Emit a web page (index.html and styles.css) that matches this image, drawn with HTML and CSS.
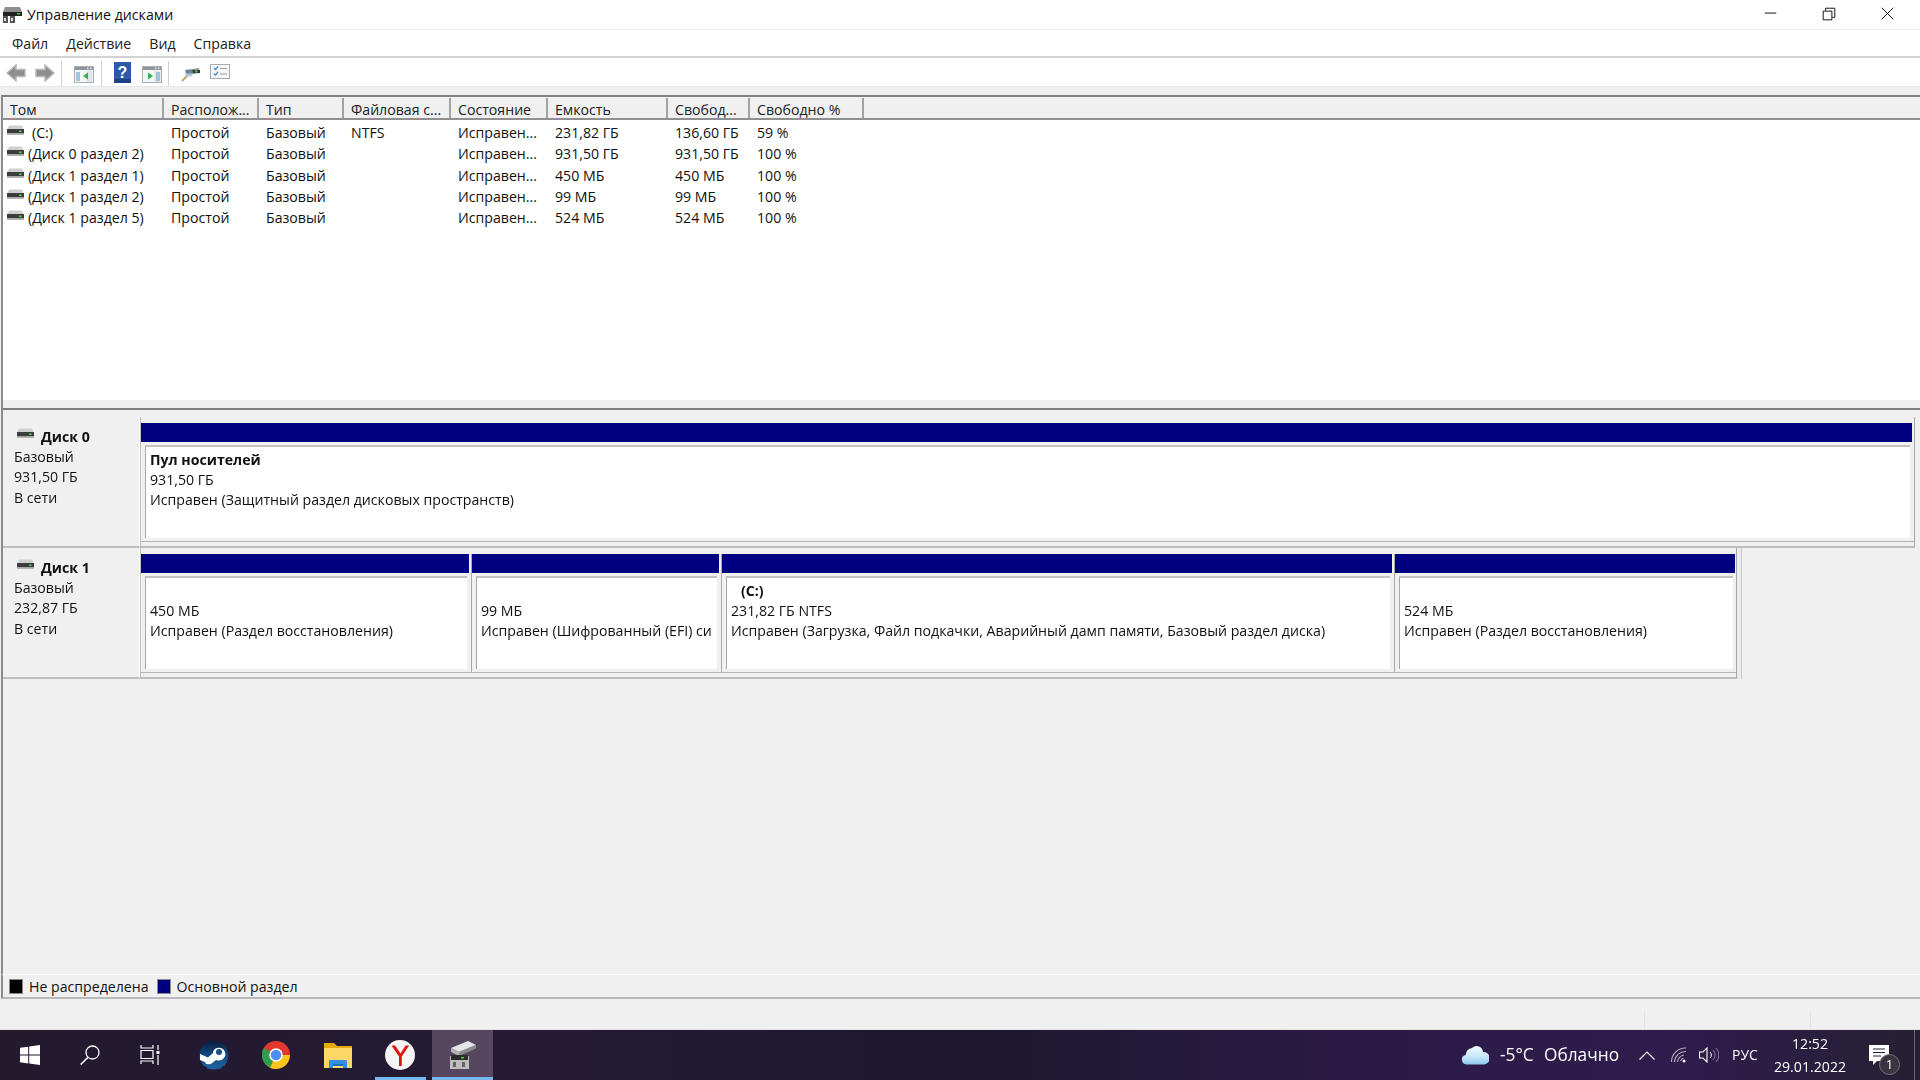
FILE: index.html
```html
<!DOCTYPE html>
<html lang="ru">
<head>
<meta charset="utf-8">
<title>Управление дисками</title>
<link rel="stylesheet" href="styles.css">
</head>
<body>
<svg class="defs" width="0" height="0">
  <symbol id="drive" viewBox="0 0 17 11">
    <path d="M2 0.500h13l1.500 3.500H.5z" fill="#cfcfcf"/>
    <rect x="0" y="4" width="17" height="4.500" fill="#3d3d3d"/>
    <rect x="0" y="8.500" width="17" height="1.500" fill="#b5b5b5"/>
    <rect x="12" y="5.500" width="2.500" height="1.500" fill="#4fd04f"/>
  </symbol>
  <symbol id="pane" viewBox="0 0 20 17">
    <rect x=".5" y=".5" width="19" height="16" fill="#f4f6f8" stroke="#a8adb2"/>
    <rect x="1" y="1" width="18" height="3" fill="#8f979e"/>
    <rect x="13" y="1.500" width="1.500" height="1.500" fill="#e8e8e8"/>
    <rect x="16" y="1.500" width="1.500" height="1.500" fill="#e8e8e8"/>
    <rect x="12.500" y="5" width="6" height="11" fill="#dfe6ea"/>
  </symbol>
</svg>
<div class="window">
  <header class="titlebar">
    <svg class="app-icon" viewBox="0 0 20 16"><path d="M3 0h15l2 5H1z" fill="#8f8f8f"/><rect x="1" y="5" width="19" height="4" fill="#222"/><rect x="15" y="6" width="3" height="1.500" fill="#46c846"/><path d="M1 9h5v7H1zM8 9h5v7H8z" fill="#555"/><path d="M2 11h2v3H2zM9 11h2v3H9z" fill="#ddd"/></svg>
    <span class="title">Управление дисками</span>
    <div class="controls">
      <svg class="ctl" viewBox="0 0 60 30"><path d="M24 13.500h12" stroke="#111" fill="none"/></svg>
      <svg class="ctl" viewBox="0 0 60 30"><path d="M24.500 11.500h9v9h-9zM27 11V8.500h9.500V18H34" stroke="#111" fill="none"/></svg>
      <svg class="ctl" viewBox="0 0 60 30"><path d="M24 8l12 12M36 8L24 20" stroke="#111" fill="none"/></svg>
    </div>
  </header>
  <nav class="menubar">
    <span class="menu-item">Файл</span>
    <span class="menu-item">Действие</span>
    <span class="menu-item">Вид</span>
    <span class="menu-item">Справка</span>
  </nav>
  <div class="toolbar">
    <svg class="tb-arrow" viewBox="0 0 20 18"><path d="M10 1L1 9l9 8v-4.500h9v-7h-9z" fill="#8e8e8e" stroke="#b8b8b8" stroke-width="1.500"/></svg>
    <svg class="tb-arrow tb-next" viewBox="0 0 20 18"><path d="M10 1l9 8-9 8v-4.500H1v-7h9z" fill="#8e8e8e" stroke="#b8b8b8" stroke-width="1.500"/></svg>
    <i class="tb-sep tb-sep-a"></i>
    <svg class="tb-pane" viewBox="0 0 20 17"><use href="#pane"/><rect x="2" y="6" width="4" height="9" fill="#9fc4dc"/><path d="M14 6.500v7l-5-3.500z" fill="#37b04a"/></svg>
    <i class="tb-sep tb-sep-b"></i>
    <svg class="tb-help" viewBox="0 0 17 21"><rect width="17" height="21" fill="#2c5aa8"/><rect y="17" width="17" height="4" fill="#1f3f86"/><text x="8.500" y="16" class="tb-help-q">?</text></svg>
    <svg class="tb-pane tb-pane2" viewBox="0 0 20 17"><use href="#pane"/><rect x="14" y="6" width="4" height="9" fill="#9fc4dc"/><path d="M6 6.500v7l5-3.500z" fill="#37b04a"/></svg>
    <i class="tb-sep tb-sep-c"></i>
    <svg class="tb-rescan" viewBox="0 0 20 18"><path d="M4 6l14-2 1 5-13 2z" fill="#9a9a9a"/><rect x="5" y="6" width="14" height="3" fill="#333"/><rect x="14" y="6.500" width="2.500" height="2" fill="#46c846"/><path d="M1 17l5-5" stroke="#c9a265" stroke-width="2"/><circle cx="8" cy="9" r="4" fill="#8fb9d9" opacity=".6"/></svg>
    <svg class="tb-check" viewBox="0 0 20 15"><rect x=".5" y=".5" width="19" height="14" fill="#f5f7f9" stroke="#a5abb0"/><path d="M4 4l1.500 1.500L8 2.500M4 9.500l1.500 1.500L8 8" stroke="#3e8fd0" fill="none" stroke-width="1.200"/><path d="M10 4.500h7M10 10h7" stroke="#9aa0a6"/></svg>
  </div>
  <div class="gap-band"></div>

  <section class="volumes">
    <div class="row head">
      <div class="cell">Том</div><div class="cell">Располож...</div><div class="cell">Тип</div><div class="cell">Файловая с...</div><div class="cell">Состояние</div><div class="cell">Емкость</div><div class="cell">Свобод...</div><div class="cell">Свободно %</div>
    </div>
    <div class="rows">
      <div class="row">
        <div class="cell name"><svg class="drive"><use href="#drive"/></svg><span class="c-label">(C:)</span></div><div class="cell">Простой</div><div class="cell">Базовый</div><div class="cell">NTFS</div><div class="cell">Исправен...</div><div class="cell">231,82 ГБ</div><div class="cell">136,60 ГБ</div><div class="cell">59 %</div>
      </div>
      <div class="row">
        <div class="cell name"><svg class="drive"><use href="#drive"/></svg><span>(Диск 0 раздел 2)</span></div><div class="cell">Простой</div><div class="cell">Базовый</div><div class="cell"></div><div class="cell">Исправен...</div><div class="cell">931,50 ГБ</div><div class="cell">931,50 ГБ</div><div class="cell">100 %</div>
      </div>
      <div class="row">
        <div class="cell name"><svg class="drive"><use href="#drive"/></svg><span>(Диск 1 раздел 1)</span></div><div class="cell">Простой</div><div class="cell">Базовый</div><div class="cell"></div><div class="cell">Исправен...</div><div class="cell">450 МБ</div><div class="cell">450 МБ</div><div class="cell">100 %</div>
      </div>
      <div class="row">
        <div class="cell name"><svg class="drive"><use href="#drive"/></svg><span>(Диск 1 раздел 2)</span></div><div class="cell">Простой</div><div class="cell">Базовый</div><div class="cell"></div><div class="cell">Исправен...</div><div class="cell">99 МБ</div><div class="cell">99 МБ</div><div class="cell">100 %</div>
      </div>
      <div class="row">
        <div class="cell name"><svg class="drive"><use href="#drive"/></svg><span>(Диск 1 раздел 5)</span></div><div class="cell">Простой</div><div class="cell">Базовый</div><div class="cell"></div><div class="cell">Исправен...</div><div class="cell">524 МБ</div><div class="cell">524 МБ</div><div class="cell">100 %</div>
      </div>
    </div>
  </section>

  <section class="disks">
    <div class="disk">
      <div class="disk-label">
        <div class="disk-name"><svg class="drive"><use href="#drive"/></svg><b>Диск 0</b></div>
        <div>Базовый</div><div>931,50 ГБ</div><div>В сети</div>
      </div>
      <div class="disk-map map-full">
        <div class="part part-full">
          <div class="bar"></div>
          <div class="box"><b>Пул носителей</b><div>931,50 ГБ</div><div>Исправен (Защитный раздел дисковых пространств)</div></div>
        </div>
      </div>
    </div>
    <div class="disk">
      <div class="disk-label">
        <div class="disk-name"><svg class="drive"><use href="#drive"/></svg><b>Диск 1</b></div>
        <div>Базовый</div><div>232,87 ГБ</div><div>В сети</div>
      </div>
      <div class="disk-map map-fit">
        <div class="part p1"><div class="bar"></div><div class="box"><div class="blank"></div><div>450 МБ</div><div>Исправен (Раздел восстановления)</div></div></div>
        <div class="part p2"><div class="bar"></div><div class="box"><div class="blank"></div><div>99 МБ</div><div>Исправен (Шифрованный (EFI) си</div></div></div>
        <div class="part p3"><div class="bar"></div><div class="box"><b class="c-part">(C:)</b><div>231,82 ГБ NTFS</div><div>Исправен (Загрузка, Файл подкачки, Аварийный дамп памяти, Базовый раздел диска)</div></div></div>
        <div class="part p4"><div class="bar"></div><div class="box"><div class="blank"></div><div>524 МБ</div><div>Исправен (Раздел восстановления)</div></div></div>
      </div>
    </div>
  </section>

  <div class="legend">
    <i class="swatch sw-black"></i><span>Не распределена</span>
    <i class="swatch sw-blue"></i><span>Основной раздел</span>
  </div>
  <div class="statusbar"><i class="st st1"></i><i class="st st2"></i></div>
</div>

<footer class="taskbar">
  <div class="tk tk-sys">
    <svg class="ic-win" viewBox="0 0 20 20"><path d="M0 2.800L8.200 1.700v7.900H0zM9.200 1.500L20 0v9.600H9.200zM0 10.500h8.200v7.900L0 17.200zM9.200 10.500H20V20L9.200 18.500z" fill="#fff"/></svg>
  </div>
  <div class="tk tk-sys">
    <svg class="ic-search" viewBox="0 0 20 20"><circle cx="12.500" cy="7.500" r="6.500" fill="none" stroke="#fff" stroke-width="1.300"/><path d="M8 12.300L.7 19.500" stroke="#fff" stroke-width="1.600"/></svg>
  </div>
  <div class="tk tk-sys">
    <svg class="ic-task" viewBox="0 0 20 20"><path d="M1 0v3h12V0M1 5.500h12v8H1zM1 19v-3h12v3" fill="none" stroke="#fff" stroke-width="1.200"/><path d="M18 0v5M18 10v10" stroke="#fff" stroke-width="1.200"/><rect x="16.500" y="6" width="3" height="3" fill="#fff"/></svg>
  </div>
  <div class="tk tk-app tk-first">
    <svg class="ic-app" viewBox="0 0 30 30"><defs><linearGradient id="stm" x1="0" y1="0" x2="0" y2="1"><stop offset="0" stop-color="#0d1a3a"/><stop offset=".45" stop-color="#10457c"/><stop offset="1" stop-color="#1a6aa4"/></linearGradient></defs><circle cx="15" cy="15" r="14.500" fill="url(#stm)"/><path d="M1 14l8 3.500 5-4.500 0-1c1-5 10-6 12 0s-4 10-9 8l-4 3c-2 3-6 2-7-1L1 20z" fill="#fff"/><circle cx="20" cy="12" r="3" fill="#1a4e84"/><path d="M4 25h22M8 28h14" stroke="#1f5d96" stroke-width="1.500"/></svg>
  </div>
  <div class="tk tk-app">
    <svg class="ic-app" viewBox="0 0 30 30"><circle cx="15" cy="15" r="14" fill="#e0382e"/><path d="M15 15L2.900 8A14 14 0 0 0 9 27.700L15 15z" fill="#2f9e4f"/><path d="M15 15H29A14 14 0 0 1 9 27.700z" fill="#f7c51c"/><circle cx="15" cy="15" r="6.800" fill="#fff"/><circle cx="15" cy="15" r="5.200" fill="#4f8df0"/></svg>
  </div>
  <div class="tk tk-app">
    <svg class="ic-app ic-folder" viewBox="0 0 30 27"><path d="M1 1h10l3 3h15v22H1z" fill="#e8a90f"/><path d="M1 6h28v20H1z" fill="#fcd667"/><path d="M6 26v-7a1 1 0 0 1 1-1h16a1 1 0 0 1 1 1v7h-4v-4H10v4z" fill="#2f8fe0"/><rect x="10" y="22" width="10" height="2" fill="#1a6fb8"/></svg>
  </div>
  <div class="tk tk-app tk-open">
    <svg class="ic-app ic-ya" viewBox="0 0 30 30"><circle cx="15" cy="15" r="15" fill="#f5f5f5"/><path d="M14 26V16.500L6.500 5.500h3.700L15.500 13.500 20.500 5.500h3.600L16.800 16.500V26z" fill="#e3120b"/></svg>
    <i class="under"></i>
  </div>
  <div class="tk tk-app tk-active">
    <svg class="ic-app ic-mgmt" viewBox="0 0 28 30"><path d="M2 8L19 1l8 4-17 7z" fill="#e6e6e6"/><path d="M10 12l17-7v3.500L10 16z" fill="#8d8d8d"/><path d="M2 8l8 4v4l-8-4z" fill="#b4b4b4"/><path d="M1 16h19v13H1z" fill="#bdbdbd"/><rect x="2" y="15" width="17" height="5" fill="#2b2b2b"/><rect x="12" y="17" width="3" height="1.500" fill="#4fd04f"/><path d="M4 22h3v5H4zM13 22h3v5h-3z" fill="#636363"/></svg>
    <i class="under under-full"></i>
  </div>
  <div class="tray">
    <svg class="ic-cloud" viewBox="0 0 28 20"><defs><linearGradient id="cld" x1="0" y1="0" x2="0" y2="1"><stop offset="0" stop-color="#f2fafe"/><stop offset=".6" stop-color="#c5e6f8"/><stop offset="1" stop-color="#8cc8ee"/></linearGradient></defs><path d="M5.500 19.500a4.800 4.800 0 0 1-.8-9.500A6.800 6.800 0 0 1 11 3 6.500 6.500 0 0 1 22 7a6.300 6.300 0 0 1 1.500 12.500z" fill="url(#cld)"/></svg>
    <span class="tr-temp">-5°C</span>
    <span class="tr-cond">Облачно</span>
    <svg class="ic-chev" viewBox="0 0 16 9"><path d="M.5 8.500L8 1l7.500 7.500" fill="none" stroke="#fff" stroke-width="1.200"/></svg>
    <svg class="ic-wifi" viewBox="0 0 16 16"><path d="M.5 15A14 14 0 0 1 15 1M3.500 15A11 11 0 0 1 15 4.500M6.500 15A8 8 0 0 1 13 8M9.500 14a5 5 0 0 1 3-3" fill="none" stroke="#b3adbd" stroke-width="1.100"/><circle cx="13" cy="14" r="1.500" fill="#fff"/></svg>
    <svg class="ic-vol" viewBox="0 0 20 16"><path d="M.5 5h3.500L8 1v14L4 11H.5z" fill="none" stroke="#fff" stroke-width="1.100"/><path d="M11 5a4 4 0 0 1 0 6" fill="none" stroke="#fff"/><path d="M14 3a7 7 0 0 1 0 10M17 1a10 10 0 0 1 0 14" fill="none" stroke="#8a8398"/></svg>
    <span class="tr-lang">РУС</span>
    <div class="tr-clock"><span>12:52</span><span>29.01.2022</span></div>
    <div class="notif">
      <svg class="ic-chat" viewBox="0 0 22 20"><path d="M0 0h20v16H8l-4 4v-4H0z" fill="#fff"/><path d="M4 4h12M4 7.500h12M4 11h8" stroke="#2a1f3a"/></svg>
      <span class="badge">1</span>
    </div>
    <i class="show-desk"></i>
  </div>
</footer>
</body>
</html>
```

FILE: styles.css
```css
* { box-sizing: border-box; }
html, body { margin: 0; height: 1080px; overflow: hidden; }
body {
  display: flex;
  flex-direction: column;
  width: 1920px;
  font: 14.15px/20px "Open Sans", "Noto Sans", sans-serif;
  color: #111;
  background: #f0f0f0;
}
.defs { position: absolute; }
.window { flex: 1; display: flex; flex-direction: column; min-height: 0; filter: blur(.3px); }

.titlebar {
  height: 30px; flex: none; display: flex; align-items: center;
  background: #fff; border-bottom: 1px solid #efefef; padding-left: 2px;
}
.app-icon { width: 20px; height: 16px; margin-right: 5px; }
.title { font-size: 14.15px; color: #111; }
.controls { margin-left: auto; display: flex; margin-right: 3px; }
.ctl { width: 59px; height: 29px; display: block; }
.ctl:first-child { margin-right: -1px; }

.menubar {
  height: 28px; flex: none; display: flex; align-items: center; background: #fff;
  border-bottom: 2px solid #d2d2d2; padding: 1px 0 0 12px; gap: 18px;
}
.menu-item { color: #222; }

.toolbar {
  height: 29px; flex: none; display: flex; align-items: center; background: #fff;
  border-bottom: 1px solid #e6e6e6; padding: 2px 0 0 6px;
}
.tb-arrow { width: 20px; height: 18px; margin-right: 9px; }
.tb-next { margin-right: 6px; }
.tb-sep { width: 1px; height: 25px; background: #cfcfcf; }
.tb-pane { width: 20px; height: 17px; margin-left: 12px; margin-top: 3px; }
.tb-sep-b { margin-left: 7px; }
.tb-help { width: 17px; height: 21px; margin-left: 12px; margin-top: -2px; }
.tb-help-q { font: bold 16px "Liberation Sans", sans-serif; fill: #fff; text-anchor: middle; }
.tb-pane2 { margin-left: 11px; }
.tb-sep-c { margin-left: 6px; }
.tb-rescan { width: 20px; height: 18px; margin-left: 12px; }
.tb-check { width: 20px; height: 15px; margin-left: 9px; margin-top: -3px; }

.gap-band { height: 8px; flex: none; background: #f0f0f0; }

.volumes {
  height: 315px; flex: none; background: #fff;
  margin-left: 1px;
  border-left: 2px solid #8c8c8c; border-top: 2px solid #7f7f7f; border-bottom: 2px solid #7f7f7f;
  box-shadow: inset 0 -8px 0 #f0f0f0;
}
.row {
  display: grid;
  grid-template-columns: 161px 95px 85px 107px 97px 120px 82px 114px;
  height: 21.25px;
  line-height: 21px;
}
.cell { padding-left: 7px; white-space: nowrap; overflow: hidden; }
.head {
  height: 23px;
  background: #f0f0f0;
  border-bottom: 2px solid #8f8f8f;
  border-top: 1px solid #f8f8f8;
  line-height: 23px;
}
.head .cell { border-right: 2px solid #a2a2a2; color: #222; }
.rows { padding-top: 2px; }
.name { display: flex; align-items: center; padding-left: 4px; }
.drive { width: 17px; height: 11px; flex: none; margin-top: -4px; margin-right: 4px; }
.c-label { margin-left: 4px; }

.disks { flex: 1; padding-top: 7px; min-height: 0; margin-left: 1px; border-left: 2px solid #8c8c8c; }
.disk { display: flex; height: 131px; }
.disk-label {
  width: 137px; flex: none; padding: 9px 0 0 11px;
  border-right: 1px solid #fff; border-bottom: 2px solid #bdbdbd;
  box-shadow: 1px 0 0 #bdbdbd;
  line-height: 20.3px;
}
.disk-name { display: flex; align-items: center; height: 22px; margin-bottom: -1px; }
.disk-name .drive { margin: -8px 7px 0 3px; }
.disk-map { display: flex; padding: 6px 0 0 1px; border-bottom: 2px solid #bdbdbd; }
.map-full { flex: 1; margin-right: 5px; border-right: 1px solid #a6a6a6; }
.map-fit { flex: none; width: 1597px; border-right: 1px solid #a6a6a6; box-shadow: 4px 0 0 #ececec, 5px 0 0 #c8c8c8; }
.part { flex: none; border-right: 1px solid #a8a8a8; border-bottom: 1px solid #b4b4b4; display: flex; flex-direction: column; padding-right: 1px; height: 119px; }
.part-full { flex: 1; border-right: 0; }
.p1 { width: 331px; }
.p2 { width: 250px; }
.p3 { width: 673px; }
.p4 { width: 341px; border-right: 0; padding-right: 0; }
.bar { height: 19px; background: #000080; flex: none; margin-right: 1px; }
.box {
  margin: 3px 3px 3px 4px; flex: 1; min-height: 0;
  background: #fff; border-top: 2px solid #c2c2c2; border-left: 1px solid #a8a8a8;
  padding: 3px 0 0 4px; white-space: nowrap; overflow: hidden; line-height: 20.2px;
}
.box b { display: block; }
.blank { height: 20px; }
.c-part { padding-left: 10px; }

.legend {
  height: 25px; flex: none; display: flex; align-items: center; padding: 1px 0 0 6px;
  background: #f0f0f0; border-top: 1px solid #fff; border-bottom: 2px solid #b8b8b8;
  margin-left: 1px; border-left: 2px solid #8c8c8c;
}
.swatch { width: 14px; height: 15px; display: block; border: 1px solid #8a8a8a; margin-right: 6px; }
.swatch.sw-blue { margin-left: 8px; }
.sw-black { background: #000; }
.sw-blue { background: #000080; }

.statusbar { height: 31px; flex: none; background: #f0f0f0; position: relative; border-bottom: 1px solid #e4e4e4; }
.st { position: absolute; top: 12px; bottom: 0; width: 1px; background: #e2e2e2; }
.st1 { left: 1644px; }
.st2 { left: 1810px; }

.taskbar {
  height: 50px; flex: none; display: flex; color: #fff; filter: blur(.25px);
  background: linear-gradient(90deg, #231a2e 0, #241a36 30%, #1e1830 50%, #2d1b4a 78%, #2e1c4c 88%, #262033 100%);
}
.tk { height: 50px; display: flex; align-items: center; justify-content: center; position: relative; flex: none; }
.tk-sys { width: 60px; }
.tk-app { width: 62px; }
.tk-first { margin-left: 3px; }
.tk-active { background: #56465f; margin-left: 1px; width: 61px; }
.under { position: absolute; left: 6px; right: 5px; bottom: 0; height: 3px; background: #76b9ed; }
.under-full { left: 0; right: 0; }
.ic-win, .ic-search, .ic-task { width: 20px; height: 20px; }
.ic-app { width: 30px; height: 30px; }
.ic-folder { height: 27px; }
.ic-mgmt { width: 28px; height: 30px; }

.tray { flex: 1; display: flex; align-items: center; position: relative; padding-left: 968px; }
.ic-cloud { width: 28px; height: 20px; flex: none; }
.tr-temp { font-size: 17.3px; margin-left: 11px; width: 44px; flex: none; white-space: nowrap; }
.tr-cond { font-size: 17.3px; width: 73px; flex: none; white-space: nowrap; }
.ic-chev { width: 16px; height: 9px; margin-left: 22px; flex: none; }
.ic-wifi { width: 16px; height: 16px; margin-left: 16px; flex: none; }
.ic-vol { width: 20px; height: 16px; margin-left: 12px; flex: none; }
.tr-lang { font-size: 14px; margin-left: 13px; width: 26px; flex: none; }
.tr-clock { display: flex; flex-direction: column; align-items: center; width: 72px; margin-left: 16px; flex: none; font-size: 14.15px; line-height: 23px; white-space: nowrap; }
.notif { position: relative; width: 22px; height: 20px; margin-left: 23px; flex: none; }
.ic-chat { width: 22px; height: 20px; display: block; }
.badge {
  position: absolute; left: 10px; top: 9px; width: 21px; height: 21px; border-radius: 50%;
  background: #3a3440; border: 1px solid #77727d; font-size: 13px; line-height: 19px; text-align: center;
}
.show-desk { position: absolute; right: 5px; top: 0; bottom: 0; width: 1px; background: #6a6475; }
```
